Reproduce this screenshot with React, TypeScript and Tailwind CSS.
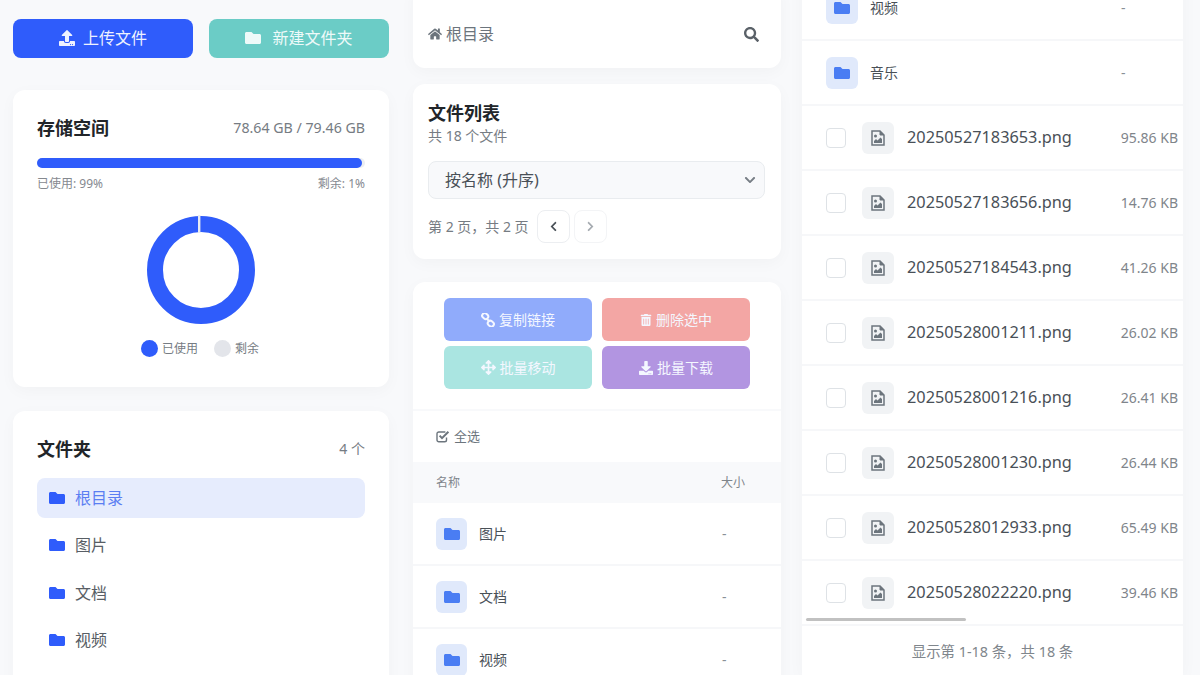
import {
  FaArrowsAlt,
  FaChevronDown,
  FaChevronLeft,
  FaChevronRight,
  FaDownload,
  FaFolder,
  FaHome,
  FaSearch,
  FaTrashAlt,
  FaUpload,
} from 'react-icons/fa';

const sidebarFolders = ['根目录', '图片', '文档', '视频'];

const files = [
  { name: '20250527183653.png', size: '95.86 KB' },
  { name: '20250527183656.png', size: '14.76 KB' },
  { name: '20250527184543.png', size: '41.26 KB' },
  { name: '20250528001211.png', size: '26.02 KB' },
  { name: '20250528001216.png', size: '26.41 KB' },
  { name: '20250528001230.png', size: '26.44 KB' },
  { name: '20250528012933.png', size: '65.49 KB' },
  { name: '20250528022220.png', size: '39.46 KB' },
];

const Donut = () => (
  <svg width="110" height="110" viewBox="0 0 110 110">
    <circle cx="55" cy="55" r="46" fill="none" stroke="#2f5cfb" strokeWidth="16" />
    <rect x="52" y="0" width="2.4" height="18" fill="#e9ebf1" />
  </svg>
);

const ImageFileIcon = () => (
  <svg width="14" height="16" viewBox="0 0 14 16" className="text-[#6c757d]">
    <path d="M1 1h8l4 4v10H1z" fill="none" stroke="currentColor" strokeWidth="1.5" />
    <path d="M9 1v4h4" fill="currentColor" stroke="currentColor" strokeWidth="1" />
    <circle cx="4.5" cy="6" r="1.5" fill="currentColor" />
    <path d="M3 13v-2l2-2 1.5 1.5L9.5 7.5 11 9v4z" fill="currentColor" />
  </svg>
);

const ChainIcon = () => (
  <svg width="14" height="14" viewBox="0 0 14 14" fill="none" stroke="currentColor" strokeWidth="2">
    <rect x="1" y="0.6" width="6.4" height="5" rx="2.5" transform="rotate(40 4.2 3.1)" />
    <rect x="6.6" y="8.2" width="6.4" height="5" rx="2.5" transform="rotate(40 9.8 10.7)" />
    <path d="M5.6 5.4l2.8 3.2" />
  </svg>
);

const CheckedBoxIcon = () => (
  <svg width="14" height="13" viewBox="0 0 14 13" fill="none" stroke="currentColor">
    <path d="M10.5 7.5V10a1.8 1.8 0 0 1-1.8 1.8H2.8A1.8 1.8 0 0 1 1 10V3.8A1.8 1.8 0 0 1 2.8 2h6.6" strokeWidth="1.4" />
    <path d="M3.6 5.6l2.4 2.5 6.4-6.4" strokeWidth="2" />
  </svg>
);

const FolderRow = ({ name, wide }: { name: string; wide?: boolean }) => (
  <div className={`flex items-center border-b-2 border-[#f6f7f9] ${wide ? 'h-[65px] pl-6' : 'h-[63px] pl-[23px]'}`}>
    <div className={`flex h-8 items-center justify-center rounded-md bg-[#e0e9fb] ${wide ? 'w-8' : 'w-[31px]'}`}>
      <FaFolder className="text-[16px] text-[#4a7df3]" />
    </div>
    <span className="ml-3 w-[243px] text-sm text-[#495057]">{name}</span>
    <span className={`text-sm text-[#8a9097] ${wide ? 'ml-2' : 'ml-0'}`}>-</span>
  </div>
);

const App = () => (
  <div className="flex h-[675px] w-[1200px] overflow-hidden bg-[#f8f9fb] font-['Noto_Sans','Noto_Sans_CJK_SC',sans-serif] text-[#212529]">
    <div className="ml-[13px] mt-[19px] w-[376px] shrink-0">
      <div className="flex gap-4">
        <button className="flex h-[39px] w-[180px] items-center justify-center gap-2 rounded-lg bg-[#2f5cfb] pb-px text-base text-[#eef2ff]">
          <FaUpload className="text-base" />
          上传文件
        </button>
        <button className="flex h-[39px] w-[180px] items-center justify-center gap-[11px] rounded-lg bg-[#6bccc6] pb-px text-base text-[#eefaf9]">
          <FaFolder className="text-base" />
          新建文件夹
        </button>
      </div>

      <div className="mt-8 h-[297px] rounded-xl bg-white px-6 pt-6 shadow-[0_4px_16px_rgba(0,0,0,0.03)]">
        <div className="flex items-center justify-between">
          <h2 className="text-lg font-bold leading-7">存储空间</h2>
          <span className="text-[14.2px] text-[#767c83]">78.64 GB / 79.46 GB</span>
        </div>
        <div className="mt-4 h-2.5 rounded-full bg-[#eceef1]">
          <div className="h-2.5 w-[99%] rounded-full bg-[#2f5cfb]" />
        </div>
        <div className="mt-2 flex justify-between text-xs text-[#85898f]">
          <span>已使用: 99%</span>
          <span>剩余: 1%</span>
        </div>
        <div className="mt-[23px] flex justify-center">
          <Donut />
        </div>
        <div className="mt-[15px] flex items-center justify-center gap-4 pr-0.5 text-xs text-[#767c83]">
          <div className="flex items-center gap-1">
            <span className="h-[17px] w-[17px] rounded-full bg-[#2f5cfb]" />
            已使用
          </div>
          <div className="flex items-center gap-1">
            <span className="h-[17px] w-[17px] rounded-full bg-[#e3e5ea]" />
            剩余
          </div>
        </div>
      </div>

      <div className="mt-6 h-[300px] rounded-xl bg-white px-6 pt-6 shadow-[0_4px_16px_rgba(0,0,0,0.03)]">
        <div className="flex items-center justify-between">
          <h2 className="text-lg font-bold leading-7">文件夹</h2>
          <span className="text-sm text-[#767c83]">4 个</span>
        </div>
        <div className="mt-[15px] flex flex-col gap-2">
          {sidebarFolders.map((folder, i) => (
            <div
              key={folder}
              className={`flex h-[39.5px] items-center gap-[10px] rounded-lg px-3 text-base ${
                i === 0 ? 'bg-[#e6ecfd] text-[#5b7ef2]' : 'text-[#585e65]'
              }`}
            >
              <FaFolder className="text-base text-[#2f5cfb]" />
              {folder}
            </div>
          ))}
        </div>
      </div>
    </div>

    <div className="-mt-4 ml-6 w-[368px] shrink-0">
      <div className="flex h-[84px] items-center justify-between rounded-xl bg-white pl-[15px] pr-[22px] pt-4 shadow-[0_4px_16px_rgba(0,0,0,0.03)]">
        <div className="flex items-center gap-1 text-base text-[#6c757d]">
          <FaHome className="text-sm" />
          根目录
        </div>
        <FaSearch className="text-[15px] text-[#5a6168]" />
      </div>

      <div className="mt-4 h-[175px] rounded-xl bg-white pl-[15px] pr-4 pt-[17px] shadow-[0_4px_16px_rgba(0,0,0,0.03)]">
        <h2 className="text-lg font-bold leading-6">文件列表</h2>
        <p className="mt-px text-sm leading-5 text-[#767c83]">共 18 个文件</p>
        <div className="mt-[15px] flex h-[38px] items-center justify-between rounded-lg border border-[#e9ecef] bg-[#f8f9fb] pl-4 pr-2 text-base text-[#495057]">
          按名称 (升序)
          <FaChevronDown className="text-[12px] text-[#777e85]" />
        </div>
        <div className="mt-[11px] flex items-center text-sm text-[#767c83]">
          <span>第 2 页，共 2 页</span>
          <span className="ml-2 flex h-[33px] w-[33px] items-center justify-center rounded-lg border border-[#eceef1] text-[#495057]">
            <FaChevronLeft className="text-[11px]" />
          </span>
          <span className="ml-1 flex h-[33px] w-[33px] items-center justify-center rounded-lg border border-[#f3f4f6] text-[#a5aab0]">
            <FaChevronRight className="text-[11px]" />
          </span>
        </div>
      </div>

      <div className="mt-[23px] rounded-t-xl bg-white shadow-[0_4px_16px_rgba(0,0,0,0.03)]">
        <div className="grid grid-cols-[148px_148px] justify-center gap-x-[10px] gap-y-[5px] border-b-2 border-[#f8f9fb] pb-5 pt-4 text-sm text-[#f4f7ff]">
          <div className="flex h-[43px] items-center justify-center gap-1 rounded-md bg-[#90abfb]">
            <ChainIcon />
            复制链接
          </div>
          <div className="flex h-[43px] items-center justify-center gap-1 rounded-md bg-[#f3a6a4]">
            <FaTrashAlt className="text-[12px]" />
            删除选中
          </div>
          <div className="flex h-[43px] items-center justify-center gap-1 rounded-md bg-[#aae5e1]">
            <FaArrowsAlt className="text-[15px]" />
            批量移动
          </div>
          <div className="flex h-[43px] items-center justify-center gap-1 rounded-md bg-[#b295e1]">
            <FaDownload className="text-[14px]" />
            批量下载
          </div>
        </div>
        <div className="flex h-[51px] items-center gap-1 pl-[23px] text-[13px] text-[#6c757d]">
          <CheckedBoxIcon />
          全选
        </div>
        <div className="flex h-[41px] items-center justify-between bg-[#f8f9fb] pl-[23px] pr-9 text-xs text-[#7f858b]">
          <span>名称</span>
          <span>大小</span>
        </div>
        <FolderRow name="图片" />
        <FolderRow name="文档" />
        <FolderRow name="视频" />
      </div>
    </div>

    <div className="-mt-6 ml-[21px] h-[699px] w-[381px] shrink-0 bg-white shadow-[0_4px_16px_rgba(0,0,0,0.03)]">
      <FolderRow name="视频" wide />
      <FolderRow name="音乐" wide />
      {files.map((file) => (
        <div key={file.name} className="flex h-[65px] items-center border-b-2 border-[#f6f7f9] pl-6 pr-[5px]">
          <span className="h-5 w-5 rounded border border-[#dee2e6]" />
          <div className="ml-4 flex h-8 w-8 items-center justify-center rounded-md bg-[#f1f3f5]">
            <ImageFileIcon />
          </div>
          <span className="ml-[13px] text-[16.3px] text-[#495057]">{file.name}</span>
          <span className="ml-auto text-sm text-[#7f858b]">{file.size}</span>
        </div>
      ))}
      <div className="relative flex h-[50px] items-center justify-center pt-0.5 text-[14.4px] text-[#80868c]">
        <span className="absolute -top-2 left-1 h-[3px] w-[160px] rounded-full bg-[#c1c1c1]" />
        显示第 1-18 条，共 18 条
      </div>
    </div>
  </div>
);

export default App;
